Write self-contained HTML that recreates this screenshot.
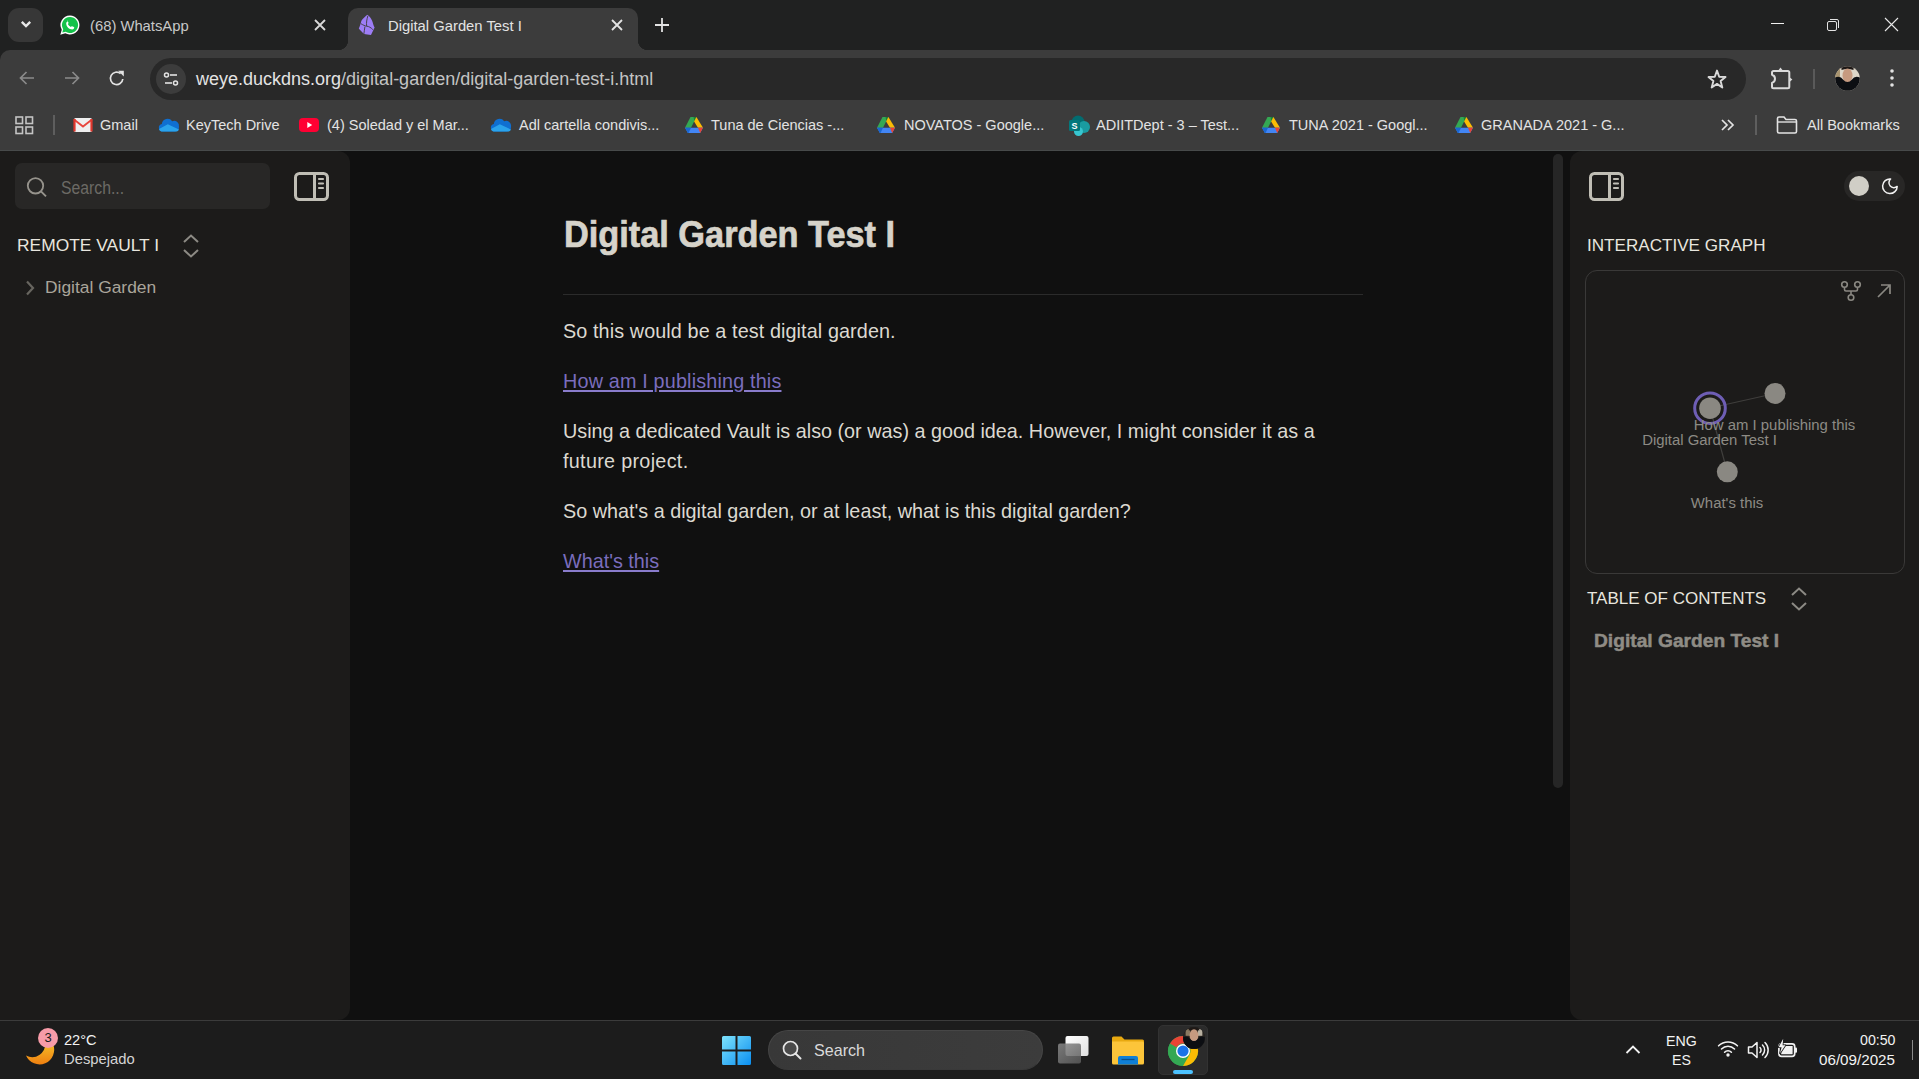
<!DOCTYPE html>
<html><head><meta charset="utf-8">
<style>
*{margin:0;padding:0;box-sizing:border-box}
html,body{width:1919px;height:1079px;overflow:hidden;background:#111;font-family:"Liberation Sans",sans-serif}
.a{position:absolute}
.t{position:absolute;white-space:nowrap;line-height:1}
#tabstrip{left:0;top:0;width:1919px;height:62px;background:#202121}
#toolbar{left:0;top:50px;width:1919px;height:56px;background:#3c3c3c;border-top-left-radius:10px}
#bookbar{left:0;top:106px;width:1919px;height:44px;background:#3c3c3c}
#bline{left:0;top:150px;width:1919px;height:1px;background:#474a4a}
#content{left:0;top:151px;width:1919px;height:869px;background:#101010}
#lside{left:0;top:151px;width:350px;height:869px;background:#1c1b1a;border-top-right-radius:12px;border-bottom-right-radius:12px}
#rside{left:1570px;top:151px;width:349px;height:869px;background:#1c1b1a;border-top-left-radius:12px;border-bottom-left-radius:12px}
#taskbar{left:0;top:1020px;width:1919px;height:59px;background:#1c1c1c;border-top:1px solid #3b3b3b}
.bm{color:#e3e3e3;font-size:14.5px;top:118px}
.body{color:#dcd9d0;font-size:19.8px}
.link{color:#7a6dbd;font-size:19.8px;text-decoration:underline;text-decoration-color:#8a7ccc;text-underline-offset:1.5px;text-decoration-thickness:1.5px}
</style></head><body>
<!-- TAB STRIP -->
<div id="tabstrip" class="a"></div>
<div class="a" style="left:8px;top:8px;width:35px;height:34px;border-radius:11px;background:#373737"></div>
<svg class="a" style="left:19px;top:18px" width="14" height="12" viewBox="0 0 14 12"><path d="M2.8 3.8 L7 8 L11.2 3.8" stroke="#e8e8e8" stroke-width="2.4" fill="none"/></svg>
<!-- whatsapp icon -->
<svg class="a" style="left:59px;top:14px" width="22" height="22" viewBox="0 0 22 22"><path d="M11 1.5a9.5 9.5 0 0 0-8.2 14.3L1.3 20.7l5-1.4A9.5 9.5 0 1 0 11 1.5z" fill="#fff"/><path d="M11 3a8 8 0 0 0-6.8 12.2l-.9 3.4 3.4-.9A8 8 0 1 0 11 3z" fill="#14c24a"/><path d="M8 6.5c.3 0 .5 0 .7.5l.8 1.8c.1.2 0 .5-.2.7l-.5.6c.6 1.2 1.7 2.3 3 2.9l.6-.6c.2-.2.4-.3.7-.2l1.8.8c.3.1.4.4.3.7-.2 1-1 1.7-2 1.7-2.9 0-6-3-6-6 0-1 .6-1.9 1.6-2z" fill="#fff"/></svg>
<div class="t" style="left:90px;top:18.5px;font-size:14.8px;color:#c8c8c8">(68) WhatsApp</div>
<svg class="a" style="left:313px;top:18px" width="14" height="14" viewBox="0 0 14 14"><path d="M2 2L12 12M12 2L2 12" stroke="#d8d8d8" stroke-width="1.8"/></svg>
<!-- active tab -->
<div class="a" style="left:348px;top:8px;width:290px;height:42px;background:#3c3c3c;border-radius:10px 10px 0 0"></div>
<div class="a" style="left:338px;top:40px;width:10px;height:10px;background:radial-gradient(circle at 0 0,#202121 10px,#3c3c3c 10.5px)"></div>
<div class="a" style="left:638px;top:40px;width:10px;height:10px;background:radial-gradient(circle at 100% 0,#202121 10px,#3c3c3c 10.5px)"></div>
<svg class="a" style="left:350px;top:8px" width="30" height="34" viewBox="0 0 30 34"><path d="M17.3 6.8C19 8 21 10 22 12.5C23 15 23.4 17.5 24.6 19.6C23.6 22 22 24.5 21 27C18.5 26.6 16 26.2 14 26C12 24 10 22 8.8 20.6C10 18 10.5 16 11.4 12.8C13 10.5 15.5 8.4 17.3 6.8Z" fill="#9d7df6"/><path d="M17.9 7.8C16.9 11 16.1 15 16.7 18.2M10.8 15.6C13 17 15 18 16.7 18.2C19 18.5 21 19.6 22.8 21.6M14.9 18.6C14.6 21 14.2 23.5 13.8 26.3" stroke="#3c3c3c" stroke-width="0.9" fill="none"/></svg>
<div class="t" style="left:388px;top:18.5px;font-size:14.8px;color:#e3e3e3">Digital Garden Test I</div>
<svg class="a" style="left:610px;top:18px" width="14" height="14" viewBox="0 0 14 14"><path d="M2 2L12 12M12 2L2 12" stroke="#e3e3e3" stroke-width="1.8"/></svg>
<svg class="a" style="left:654px;top:17px" width="16" height="16" viewBox="0 0 16 16"><path d="M8 1V15M1 8H15" stroke="#e3e3e3" stroke-width="1.8"/></svg>
<!-- window controls -->
<div class="a" style="left:1771px;top:23px;width:13px;height:1px;background:#f0f0f0"></div>
<svg class="a" style="left:1825px;top:16.5px" width="16" height="16" viewBox="0 0 16 16"><rect x="2.5" y="4.5" width="9" height="9" rx="1.5" stroke="#e3e3e3" fill="none"/><path d="M5 2.5H12a1.5 1.5 0 0 1 1.5 1.5V11" stroke="#e3e3e3" fill="none"/></svg>
<svg class="a" style="left:1884px;top:17px" width="15" height="15" viewBox="0 0 15 15"><path d="M1 1L14 14M14 1L1 14" stroke="#e8e8e8" stroke-width="1.1"/></svg>

<!-- TOOLBAR -->
<div id="toolbar" class="a"></div>
<svg class="a" style="left:18px;top:69px" width="18" height="18" viewBox="0 0 18 18"><path d="M16 9H3M8.5 3L2.5 9L8.5 15" stroke="#8a8a8a" stroke-width="1.7" fill="none"/></svg>
<svg class="a" style="left:63px;top:69px" width="18" height="18" viewBox="0 0 18 18"><path d="M2 9H15M9.5 3L15.5 9L9.5 15" stroke="#8a8a8a" stroke-width="1.7" fill="none"/></svg>
<svg class="a" style="left:108px;top:69px" width="18" height="18" viewBox="0 0 18 18"><path d="M14.8 10A6.2 6.2 0 1 1 12.6 4.6" stroke="#e3e3e3" stroke-width="1.7" fill="none"/><path d="M10.2 1.8H15.8V7.4Z" fill="#e3e3e3"/></svg>
<div class="a" style="left:150px;top:58px;width:1596px;height:42px;border-radius:21px;background:#282828"></div>
<div class="a" style="left:156px;top:64px;width:30px;height:30px;border-radius:15px;background:#3c3c3c"></div>
<svg class="a" style="left:162px;top:70px" width="18" height="18" viewBox="0 0 18 18"><circle cx="4.5" cy="5" r="2" stroke="#e3e3e3" stroke-width="1.5" fill="none"/><path d="M8 5H15" stroke="#e3e3e3" stroke-width="1.6"/><circle cx="13.5" cy="13" r="2" stroke="#e3e3e3" stroke-width="1.5" fill="none"/><path d="M3 13H10" stroke="#e3e3e3" stroke-width="1.6"/></svg>
<div class="t" style="left:196px;top:70px;font-size:18px;color:#e3e3e3">weye.duckdns.org<span style="color:#c4c4c4">/digital-garden/digital-garden-test-i.html</span></div>
<svg class="a" style="left:1706px;top:68px" width="22" height="22" viewBox="0 0 22 22"><path d="M11 2.6L13.2 8.7L19.5 9L14.6 13.1L16.3 19.5L11 15.9L5.7 19.5L7.4 13.1L2.5 9L8.8 8.7Z" stroke="#dadada" stroke-width="1.9" fill="none" stroke-linejoin="round"/></svg>
<svg class="a" style="left:1769px;top:66px" width="26" height="24" viewBox="0 0 26 24"><path d="M4.5 5H18.8A1.5 1.5 0 0 1 20.3 6.5V20.7A1.5 1.5 0 0 1 18.8 22.2H4.5A1.5 1.5 0 0 1 3 20.7V16.9C5.2 16.2 6 14.6 6 12.8C6 11 5.2 9.4 3 8.7V6.5A1.5 1.5 0 0 1 4.5 5Z" stroke="#dadada" stroke-width="2" fill="none" stroke-linejoin="round"/><path d="M9 4.8L11.5 1.5L14 4.8Z" fill="#dadada"/><path d="M20.2 11L23.4 13.6L20.2 16.2Z" fill="#dadada"/></svg>
<div class="a" style="left:1813px;top:69px;width:2px;height:20px;background:#5a5a5a"></div>
<svg class="a" style="left:1835px;top:66px" width="25" height="25" viewBox="0 0 25 25"><defs><clipPath id="av"><circle cx="12.5" cy="12.5" r="12.3"/></clipPath></defs><g clip-path="url(#av)"><rect width="25" height="25" fill="#ddd6c8"/><rect x="0" y="2" width="5" height="10" fill="#a89470"/><path d="M6.5 0H18.5V4Q12.5 2 6.5 4Z" fill="#1e1816"/><ellipse cx="12.5" cy="9.5" rx="5" ry="7" fill="#c69a80"/><path d="M0 11.5Q5.5 9.5 8 13.5Q12.5 18.5 17 13.5Q19.5 9.5 25 11.5V25H0Z" fill="#0c0e12"/></g></svg>
<svg class="a" style="left:1884px;top:68px" width="16" height="20" viewBox="0 0 16 20"><circle cx="8" cy="3" r="1.8" fill="#e3e3e3"/><circle cx="8" cy="10" r="1.8" fill="#e3e3e3"/><circle cx="8" cy="17" r="1.8" fill="#e3e3e3"/></svg>
<div id="bookbar" class="a"></div>
<svg class="a" style="left:15px;top:116px" width="19" height="19" viewBox="0 0 19 19"><rect x="1" y="1" width="6.5" height="6.5" stroke="#c4c4c4" stroke-width="1.6" fill="none"/><rect x="11" y="1" width="6.5" height="6.5" stroke="#c4c4c4" stroke-width="1.6" fill="none"/><rect x="1" y="11" width="6.5" height="6.5" stroke="#c4c4c4" stroke-width="1.6" fill="none"/><rect x="11" y="11" width="6.5" height="6.5" stroke="#c4c4c4" stroke-width="1.6" fill="none"/></svg>
<div class="a" style="left:53px;top:115px;width:2px;height:20px;background:#5e5e5e"></div>
<svg class="a" style="left:73px;top:117px" width="20" height="16" viewBox="0 0 20 16"><rect x="1" y="1" width="18" height="14" rx="1.5" fill="#efefef"/><path d="M1 2.5L10 9.5L19 2.5" stroke="#e8453c" stroke-width="1.8" fill="none"/><path d="M1.5 2V14.5M18.5 2V14.5" stroke="#e0372d" stroke-width="2.2"/></svg>
<div class="t bm" style="left:100px">Gmail</div>
<svg class="a" style="left:158px;top:117px" width="22" height="16" viewBox="0 0 22 16"><path d="M4.5 14.5A3.8 3.8 0 0 1 3.8 7A5.8 5.8 0 0 1 14.2 4.2A5 5 0 0 1 21 9.8A4.5 4.5 0 0 1 17 14.5Z" fill="#0f6fd1"/><path d="M3.2 14.5A3 3 0 0 1 1 12L9.8 7.2L21 12.6A3 3 0 0 1 17.5 14.5Z" fill="#2aa3ec"/></svg>
<div class="t bm" style="left:186px">KeyTech Drive</div>
<div class="a" style="left:299px;top:118px;width:20px;height:14px;border-radius:4px;background:#ff0033"></div>
<svg class="a" style="left:299px;top:118px" width="20" height="14" viewBox="0 0 20 14"><path d="M8.3 4L13.2 7L8.3 10Z" fill="#fff"/></svg>
<div class="t bm" style="left:327px">(4) Soledad y el Mar...</div>
<svg class="a" style="left:490px;top:117px" width="22" height="16" viewBox="0 0 22 16"><path d="M4.5 14.5A3.8 3.8 0 0 1 3.8 7A5.8 5.8 0 0 1 14.2 4.2A5 5 0 0 1 21 9.8A4.5 4.5 0 0 1 17 14.5Z" fill="#0f6fd1"/><path d="M3.2 14.5A3 3 0 0 1 1 12L9.8 7.2L21 12.6A3 3 0 0 1 17.5 14.5Z" fill="#2aa3ec"/></svg>
<div class="t bm" style="left:519px">Adl cartella condivis...</div>
<svg class="a" style="left:684px;top:116px" width="20" height="18" viewBox="0 0 20 18"><path d="M6.5 1H12.4L7 11.7H1Z" fill="#34a853"/><path d="M9.5 1H12.4L10.4 5Z" fill="#188038"/><path d="M12.4 1L19 11.7H14L10.1 5.6Z" fill="#fbbc04"/><path d="M1 11.7H19L16.2 17H3.9Z" fill="#4285f4"/><path d="M1 11.7H7L4.6 17H3.9Z" fill="#1967d2"/><path d="M14 11.7H19L16.2 17Z" fill="#ea4335"/></svg>
<div class="t bm" style="left:711px">Tuna de Ciencias -...</div>
<svg class="a" style="left:876px;top:116px" width="20" height="18" viewBox="0 0 20 18"><path d="M6.5 1H12.4L7 11.7H1Z" fill="#34a853"/><path d="M9.5 1H12.4L10.4 5Z" fill="#188038"/><path d="M12.4 1L19 11.7H14L10.1 5.6Z" fill="#fbbc04"/><path d="M1 11.7H19L16.2 17H3.9Z" fill="#4285f4"/><path d="M1 11.7H7L4.6 17H3.9Z" fill="#1967d2"/><path d="M14 11.7H19L16.2 17Z" fill="#ea4335"/></svg>
<div class="t bm" style="left:904px">NOVATOS - Google...</div>
<svg class="a" style="left:1068px;top:115px" width="23" height="21" viewBox="0 0 23 21"><circle cx="10" cy="7" r="6.5" fill="#036c70"/><circle cx="16" cy="12" r="6" fill="#1a9ba1"/><circle cx="10.5" cy="16.5" r="4.5" fill="#37c6d0"/><rect x="1" y="5" width="11" height="11" rx="1.5" fill="#03787c"/><text x="6.5" y="14" font-family="Liberation Sans" font-weight="bold" font-size="9" fill="#fff" text-anchor="middle">S</text></svg>
<div class="t bm" style="left:1096px">ADIITDept - 3 – Test...</div>
<svg class="a" style="left:1261px;top:116px" width="20" height="18" viewBox="0 0 20 18"><path d="M6.5 1H12.4L7 11.7H1Z" fill="#34a853"/><path d="M9.5 1H12.4L10.4 5Z" fill="#188038"/><path d="M12.4 1L19 11.7H14L10.1 5.6Z" fill="#fbbc04"/><path d="M1 11.7H19L16.2 17H3.9Z" fill="#4285f4"/><path d="M1 11.7H7L4.6 17H3.9Z" fill="#1967d2"/><path d="M14 11.7H19L16.2 17Z" fill="#ea4335"/></svg>
<div class="t bm" style="left:1289px">TUNA 2021 - Googl...</div>
<svg class="a" style="left:1454px;top:116px" width="20" height="18" viewBox="0 0 20 18"><path d="M6.5 1H12.4L7 11.7H1Z" fill="#34a853"/><path d="M9.5 1H12.4L10.4 5Z" fill="#188038"/><path d="M12.4 1L19 11.7H14L10.1 5.6Z" fill="#fbbc04"/><path d="M1 11.7H19L16.2 17H3.9Z" fill="#4285f4"/><path d="M1 11.7H7L4.6 17H3.9Z" fill="#1967d2"/><path d="M14 11.7H19L16.2 17Z" fill="#ea4335"/></svg>
<div class="t bm" style="left:1481px">GRANADA 2021 - G...</div>
<svg class="a" style="left:1720px;top:118px" width="16" height="14" viewBox="0 0 16 14"><path d="M2 2L7 7L2 12M8 2L13 7L8 12" stroke="#e3e3e3" stroke-width="1.7" fill="none"/></svg>
<div class="a" style="left:1755px;top:115px;width:2px;height:20px;background:#5e5e5e"></div>
<svg class="a" style="left:1776px;top:115px" width="22" height="20" viewBox="0 0 22 20"><path d="M1.5 3.5a1.5 1.5 0 0 1 1.5-1.5H8L10 4.5H19a1.5 1.5 0 0 1 1.5 1.5V16.5a1.5 1.5 0 0 1-1.5 1.5H3a1.5 1.5 0 0 1-1.5-1.5Z" stroke="#e3e3e3" stroke-width="1.6" fill="none"/><path d="M1.5 7H20.5" stroke="#e3e3e3" stroke-width="1.4"/></svg>
<div class="t bm" style="left:1807px">All Bookmarks</div>
<div id="bline" class="a"></div>

<!-- CONTENT -->
<div id="content" class="a"></div>
<div id="lside" class="a"></div>
<div class="a" style="left:15px;top:163px;width:255px;height:46px;border-radius:7px;background:#282726"></div>
<svg class="a" style="left:25px;top:174.5px" width="24" height="24" viewBox="0 0 24 24"><circle cx="10.5" cy="10.8" r="7.7" stroke="#96938c" stroke-width="1.8" fill="none"/><path d="M16 16.3L21 21.3" stroke="#96938c" stroke-width="1.9"/></svg>
<div class="t" style="left:61px;top:180px;font-size:17.5px;color:#6c6a65;transform:scaleX(0.9);transform-origin:0 0">Search...</div>
<svg class="a" style="left:292px;top:170px" width="39" height="33" viewBox="0 0 39 33"><rect x="3.5" y="3.5" width="32" height="26" rx="4" stroke="#c0beb5" stroke-width="3" fill="none"/><path d="M22.5 3.5V29.5" stroke="#c0beb5" stroke-width="3"/><path d="M27 9H31M27 13.5H31M27 18H31" stroke="#c0beb5" stroke-width="2.2" stroke-linecap="round"/></svg>
<div class="t" style="left:17px;top:237px;font-size:17.4px;color:#e8e6df">REMOTE VAULT I</div>
<svg class="a" style="left:181px;top:233px" width="20" height="26" viewBox="0 0 20 26"><path d="M3 9L10 2.5L17 9M3 17L10 23.5L17 17" stroke="#8c8a84" stroke-width="2" fill="none"/></svg>
<svg class="a" style="left:24px;top:279px" width="12" height="17" viewBox="0 0 12 17"><path d="M3 2.5L9 9L3 15.5" stroke="#67655f" stroke-width="2.2" fill="none"/></svg>
<div class="t" style="left:45px;top:279px;font-size:17.4px;color:#aaa59b">Digital Garden</div>

<div class="t" style="left:564px;top:216.5px;font-size:36px;font-weight:bold;color:#d6d3ca;-webkit-text-stroke:0.7px #d6d3ca;transform:scaleX(0.953);transform-origin:0 0">Digital Garden Test I</div>
<div class="a" style="left:563px;top:294px;width:800px;height:1px;background:#2b2b2b"></div>
<div class="t body" style="left:563px;top:322px;letter-spacing:0.1px">So this would be a test digital garden.</div>
<div class="t link" style="left:563px;top:372px;letter-spacing:0.17px">How am I publishing this</div>
<div class="t body" style="left:563px;top:422px">Using a dedicated Vault is also (or was) a good idea. However, I might consider it as a</div>
<div class="t body" style="left:563px;top:452px;letter-spacing:0.3px">future project.</div>
<div class="t body" style="left:563px;top:502px">So what's a digital garden, or at least, what is this digital garden?</div>
<div class="t link" style="left:563px;top:552px">What's this</div>

<div class="a" style="left:1553px;top:154px;width:10px;height:634px;border-radius:5px;background:#262626"></div>

<div id="rside" class="a"></div>
<svg class="a" style="left:1587px;top:170px" width="39" height="33" viewBox="0 0 39 33"><rect x="3.5" y="3.5" width="32" height="26" rx="4" stroke="#c0beb5" stroke-width="3" fill="none"/><path d="M22.5 3.5V29.5" stroke="#c0beb5" stroke-width="3"/><path d="M27 9H31M27 13.5H31M27 18H31" stroke="#c0beb5" stroke-width="2.2" stroke-linecap="round"/></svg>
<div class="a" style="left:1844px;top:171px;width:61px;height:30px;border-radius:15px;background:#282726"></div>
<div class="a" style="left:1849px;top:176px;width:20px;height:20px;border-radius:10px;background:#d0cec6"></div>
<svg class="a" style="left:1880px;top:176px" width="20" height="20" viewBox="0 0 20 20"><path d="M10.6 3A7.3 7.3 0 1 0 17.2 10.4A4.8 4.8 0 0 1 10.6 3Z" stroke="#f2f2f2" stroke-width="1.5" fill="none" stroke-linejoin="round"/></svg>
<div class="t" style="left:1587px;top:237px;font-size:17.1px;color:#e8e6df">INTERACTIVE GRAPH</div>
<div class="a" style="left:1585px;top:270px;width:320px;height:304px;border-radius:12px;border:1px solid #3a3938"></div>
<svg class="a" style="left:1840px;top:280px" width="22" height="22" viewBox="0 0 22 22"><circle cx="4.5" cy="4.5" r="2.8" stroke="#8a8882" stroke-width="1.6" fill="none"/><circle cx="17.5" cy="4.5" r="2.8" stroke="#8a8882" stroke-width="1.6" fill="none"/><circle cx="11" cy="17.5" r="2.8" stroke="#8a8882" stroke-width="1.6" fill="none"/><path d="M4.5 7.3V9.5a1.5 1.5 0 0 0 1.5 1.5H16a1.5 1.5 0 0 0 1.5-1.5V7.3M11 11V14.7" stroke="#8a8882" stroke-width="1.6" fill="none"/></svg>
<svg class="a" style="left:1875px;top:282px" width="18" height="18" viewBox="0 0 18 18"><path d="M3 15L15 3M6 3H15V12" stroke="#8a8882" stroke-width="1.7" fill="none"/></svg>
<svg class="a" style="left:1586px;top:271px" width="318" height="302" viewBox="1586 271 318 302">
<path d="M1710 408L1775 393.5M1710 408L1727.3 472" stroke="#3f3e3c" stroke-width="1.2"/>
<circle cx="1710" cy="408.2" r="15.3" stroke="#6e5eb5" stroke-width="3" fill="none"/>
<circle cx="1710" cy="408.2" r="10.8" fill="#8a8882"/>
<circle cx="1775" cy="393.4" r="10.5" fill="#8a8882"/>
<circle cx="1727.3" cy="471.8" r="10.5" fill="#8a8882"/>
<g font-family="Liberation Sans" font-size="14.9" fill="#8d8b85" text-anchor="middle">
<text x="1774.5" y="429.8">How am I publishing this</text>
<text x="1709.5" y="445">Digital Garden Test I</text>
<text x="1727" y="508.4">What's this</text>
</g></svg>
<div class="t" style="left:1587px;top:590px;font-size:17px;color:#e8e6df">TABLE OF CONTENTS</div>
<svg class="a" style="left:1789px;top:586px" width="20" height="26" viewBox="0 0 20 26"><path d="M3 9L10 2.5L17 9M3 17L10 23.5L17 17" stroke="#8c8a84" stroke-width="2" fill="none"/></svg>
<div class="t" style="left:1594px;top:631px;font-size:19.2px;font-weight:bold;color:#8f8c85;-webkit-text-stroke:0.5px #8f8c85">Digital Garden Test I</div>

<!-- TASKBAR -->
<div id="taskbar" class="a"></div>
<svg class="a" style="left:24px;top:1036px" width="34" height="30" viewBox="0 0 34 30"><defs><linearGradient id="mg" x1="0" y1="0" x2="0" y2="1"><stop offset="0" stop-color="#f5c02a"/><stop offset="1" stop-color="#ef7f10"/></linearGradient></defs><path d="M29 8A14 14 0 0 1 2 19.5A13 13 0 0 0 21 6Z" fill="url(#mg)"/></svg>
<div class="a" style="left:38px;top:1028px;width:20px;height:20px;border-radius:10px;background:#f79ba8"></div>
<div class="t" style="left:38px;top:1031px;width:20px;text-align:center;font-size:13px;color:#1a1a1a">3</div>
<div class="t" style="left:64px;top:1033px;font-size:14.6px;color:#f2f2f2">22°C</div>
<div class="t" style="left:64px;top:1052px;font-size:14.8px;color:#d4d4d4">Despejado</div>
<svg class="a" style="left:722px;top:1036px" width="29" height="29" viewBox="0 0 29 29"><defs><linearGradient id="wg" x1="0" y1="0" x2="1" y2="1"><stop offset="0" stop-color="#7ee3fc"/><stop offset="1" stop-color="#0a8ef0"/></linearGradient></defs><path d="M1.5 0H13.5V13.5H0V1.5A1.5 1.5 0 0 1 1.5 0ZM15.5 0H27.5A1.5 1.5 0 0 1 29 1.5V13.5H15.5ZM0 15.5H13.5V29H1.5A1.5 1.5 0 0 1 0 27.5ZM15.5 15.5H29V27.5A1.5 1.5 0 0 1 27.5 29H15.5Z" fill="url(#wg)"/></svg>
<div class="a" style="left:768px;top:1030px;width:275px;height:40px;border-radius:20px;background:linear-gradient(90deg,#383838,#3c3c3c);border:1px solid #464646;border-bottom-color:#393939"></div>
<svg class="a" style="left:781px;top:1039px" width="22" height="22" viewBox="0 0 22 22"><circle cx="9.5" cy="9.5" r="7" stroke="#e6e6e6" stroke-width="1.7" fill="#4a4a4a"/><path d="M14.5 14.5L19.5 19.5" stroke="#e6e6e6" stroke-width="2" stroke-linecap="round"/></svg>
<div class="t" style="left:814px;top:1042px;font-size:16.1px;color:#dadada">Search</div>
<svg class="a" style="left:1057px;top:1035px" width="33" height="30" viewBox="0 0 33 30"><defs><linearGradient id="tv1" x1="0" y1="0" x2="1" y2="1"><stop offset="0" stop-color="#8a8a8a"/><stop offset="1" stop-color="#5a5a5a"/></linearGradient><linearGradient id="tv2" x1="0" y1="0" x2="1" y2="1"><stop offset="0" stop-color="#ffffff"/><stop offset="1" stop-color="#e0e0e0"/></linearGradient></defs><rect x="8.5" y="1" width="23" height="20" rx="2" fill="url(#tv2)"/><rect x="1" y="8.5" width="23" height="20" rx="2" fill="url(#tv1)" opacity=".85"/></svg>
<svg class="a" style="left:1112px;top:1036px" width="32" height="29" viewBox="0 0 32 29"><path d="M0 2A1.5 1.5 0 0 1 1.5 0.5H9.5L12.5 3.5H30.5A1.5 1.5 0 0 1 32 5V7H0Z" fill="#e8a910"/><path d="M0 5.5H30.5A1.5 1.5 0 0 1 32 7V27A1.5 1.5 0 0 1 30.5 28.5H1.5A1.5 1.5 0 0 1 0 27Z" fill="#fcc53a"/><path d="M6 22A2 2 0 0 1 8 20H24A2 2 0 0 1 26 22V28.5H6Z" fill="#0f7fd6"/><path d="M9.5 23.5H22.5" stroke="#0a4f8a" stroke-width="1.3"/></svg>
<div class="a" style="left:1158px;top:1025px;width:50px;height:50px;border-radius:5px;background:#2b2b2b;border:1px solid #323232"></div>
<svg class="a" style="left:1167px;top:1035px" width="32" height="32" viewBox="0 0 32 32"><circle cx="16" cy="16" r="15" fill="#34a853"/><path d="M16 1A15 15 0 0 1 29 8.5H16A7.5 7.5 0 0 0 9.5 12.3L3 8.5A15 15 0 0 1 16 1Z" fill="#ea4335"/><path d="M29 8.5A15 15 0 0 1 16 31L22.5 19.7A7.5 7.5 0 0 0 22.5 12.3Z" fill="#fbbc04"/><path d="M3 8.5L9.5 19.7A7.5 7.5 0 0 0 16 23.5L16 31A15 15 0 0 1 3 8.5Z" fill="#34a853"/><circle cx="16" cy="16" r="7" fill="#fff"/><circle cx="16" cy="16" r="5.6" fill="#1a73e8"/></svg>
<svg class="a" style="left:1183px;top:1027px" width="22" height="22" viewBox="0 0 25 25"><circle cx="12.5" cy="12.5" r="12.5" fill="#1a1a1a"/><g clip-path="url(#av)"><rect width="25" height="25" fill="#2a2622"/><rect x="3" y="2" width="5" height="8" fill="#8a7a62"/><rect x="17" y="2" width="5" height="8" fill="#b8b0a0"/><path d="M6.5 0H18.5V4Q12.5 2 6.5 4Z" fill="#1e1816"/><ellipse cx="12.5" cy="9.5" rx="5" ry="7" fill="#c69a80"/><path d="M0 11.5Q5.5 9.5 8 13.5Q12.5 18.5 17 13.5Q19.5 9.5 25 11.5V25H0Z" fill="#0c0e12"/></g></svg>
<div class="a" style="left:1173px;top:1070px;width:20px;height:4px;border-radius:2px;background:#4cc2ff"></div>
<svg class="a" style="left:1624px;top:1043px" width="18" height="13" viewBox="0 0 18 13"><path d="M2.5 10L9 3.5L15.5 10" stroke="#f2f2f2" stroke-width="1.8" fill="none"/></svg>
<div class="t" style="left:1666px;top:1034px;font-size:14.2px;color:#f2f2f2">ENG</div>
<div class="t" style="left:1672px;top:1053px;font-size:14.2px;color:#f2f2f2">ES</div>
<svg class="a" style="left:1716px;top:1039px" width="24" height="20" viewBox="0 0 24 20"><path d="M2.6 6.8A13.5 13.5 0 0 1 21.4 6.8M5.5 10A9 9 0 0 1 18.5 10M8.6 13.2A4.6 4.6 0 0 1 15.4 13.2" stroke="#f2f2f2" stroke-width="1.6" fill="none" stroke-linecap="round"/><circle cx="12" cy="16" r="1.7" fill="#f2f2f2"/></svg>
<svg class="a" style="left:1746px;top:1040px" width="24" height="20" viewBox="0 0 24 20"><path d="M2.5 7H6L11 2.5V17.5L6 13H2.5Z" stroke="#f2f2f2" stroke-width="1.5" fill="none" stroke-linejoin="round"/><path d="M14 7.5A3.5 3.5 0 0 1 14 12.5M16.5 5A7 7 0 0 1 16.5 15M19 2.5A10.5 10.5 0 0 1 19 17.5" stroke="#f2f2f2" stroke-width="1.5" fill="none" stroke-linecap="round"/></svg>
<svg class="a" style="left:1776px;top:1038px" width="26" height="22" viewBox="0 0 26 22"><rect x="2.9" y="5.9" width="15.8" height="12.4" rx="2.6" stroke="#f2f2f2" stroke-width="1.7" fill="none"/><rect x="18.6" y="9.6" width="2.4" height="5.2" rx="1" fill="#f2f2f2"/><path d="M9 8H16.6V16.3H5.2V13.5Z" fill="#f2f2f2"/><path d="M7.2 0.8L2.6 9.2H5.6L4 15.2L9.4 7.2H6.6Z" fill="#f2f2f2" stroke="#1c1c1c" stroke-width="1.6" paint-order="stroke" stroke-linejoin="round"/></svg>
<div class="t" style="left:1860px;top:1033px;font-size:14.2px;color:#f2f2f2">00:50</div>
<div class="t" style="left:1819px;top:1052px;font-size:15.2px;color:#f2f2f2">06/09/2025</div>
<div class="a" style="left:1912px;top:1040px;width:1px;height:20px;background:#8a8a8a"></div>
</body></html>
